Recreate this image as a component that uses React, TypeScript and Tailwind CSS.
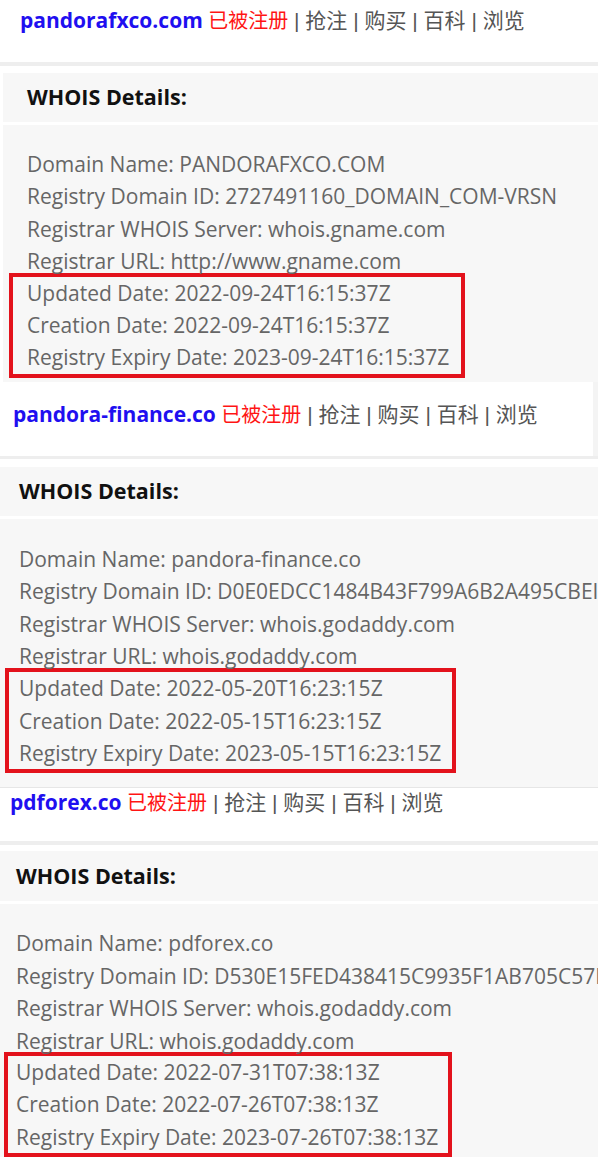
import React from "react";

const FONT = "font-['Open_Sans','Noto_Sans_CJK_SC',sans-serif]";

function Header({ domain, className }: { domain: string; className: string }) {
  return (
    <div className={`${className} bg-white text-[21px] leading-[24px] whitespace-nowrap ${FONT}`}>
      <span className="font-bold text-[#1f0ff0]">{domain}</span>{" "}
      <span className="text-[#ff1414] font-['Noto_Sans_CJK_SC',sans-serif] text-[20px]">已被注册</span>
      <span className="text-[#555555] font-['Liberation_Sans','Noto_Sans_CJK_SC',sans-serif]"> | 抢注 | 购买 | 百科 | 浏览</span>
    </div>
  );
}

function Line({ text, className = "" }: { text: string; className?: string }) {
  return (
    <div className={`h-[32.4px] leading-[32.4px] whitespace-nowrap ${className}`}>{text}</div>
  );
}

type Data = {
  domain: string;
  name: string;
  id: string;
  server: string;
  url: string;
  updated: string;
  created: string;
  expiry: string;
};

const data: Data[] = [
  {
    domain: "pandorafxco.com",
    name: "PANDORAFXCO.COM",
    id: "2727491160_DOMAIN_COM-VRSN",
    server: "whois.gname.com",
    url: "http://www.gname.com",
    updated: "2022-09-24T16:15:37Z",
    created: "2022-09-24T16:15:37Z",
    expiry: "2023-09-24T16:15:37Z",
  },
  {
    domain: "pandora-finance.co",
    name: "pandora-finance.co",
    id: "D0E0EDCC1484B43F799A6B2A495CBEI",
    server: "whois.godaddy.com",
    url: "whois.godaddy.com",
    updated: "2022-05-20T16:23:15Z",
    created: "2022-05-15T16:23:15Z",
    expiry: "2023-05-15T16:23:15Z",
  },
  {
    domain: "pdforex.co",
    name: "pdforex.co",
    id: "D530E15FED438415C9935F1AB705C57I",
    server: "whois.godaddy.com",
    url: "whois.godaddy.com",
    updated: "2022-07-31T07:38:13Z",
    created: "2022-07-26T07:38:13Z",
    expiry: "2023-07-26T07:38:13Z",
  },
];

function Body({ d, linePad, boxPad, boxClass }: { d: Data; linePad: string; boxPad: string; boxClass: string }) {
  return (
    <div className={`text-[21px] text-[#666666] ${FONT}`}>
      <Line text={`Domain Name: ${d.name}`} className={linePad} />
      <Line text={`Registry Domain ID: ${d.id}`} className={linePad} />
      <Line text={`Registrar WHOIS Server: ${d.server}`} className={linePad} />
      <Line text={`Registrar URL: ${d.url}`} className={linePad} />
      <div className={`border-[4px] border-[#e3121c] ${boxClass}`}>
        <Line text={`Updated Date: ${d.updated}`} className={boxPad} />
        <Line text={`Creation Date: ${d.created}`} className={boxPad} />
        <Line text={`Registry Expiry Date: ${d.expiry}`} className={boxPad} />
      </div>
    </div>
  );
}

function WhoisTitle({ className }: { className: string }) {
  return (
    <div className={`bg-[#f7f7f7] flex items-center font-bold text-[21.5px] text-[#111111] ${FONT} ${className}`}>
      WHOIS Details:
    </div>
  );
}

export default function App() {
  return (
    <div className="w-[598px] h-[1161px] bg-white overflow-hidden">
      {/* Section 1 */}
      <Header domain={data[0].domain} className="h-[62px] pl-[20px] pt-[8px]" />
      <div className="h-[4px] bg-[#eeeeee]" />
      <div className="h-[7px]" />
      <WhoisTitle className="ml-[3px] h-[49px] pl-[24px]" />
      <div className="h-[3px]" />
      <div className="ml-[3px] bg-[#f7f7f7] pt-[23px] pb-[4px] pl-[6px] overflow-hidden">
        <Body d={data[0]} linePad="pl-[18px]" boxPad="pl-[14px]" boxClass="w-[456px] -mt-[5px]" />
      </div>

      {/* Section 2 */}
      <div className="flex h-[74px]">
        <Header domain={data[1].domain} className="flex-1 pl-[13px] pt-[20px]" />
        <div className="w-[5px] bg-[#f4f4f4]" />
      </div>
      <div className="h-[3px] bg-[#eeeeee]" />
      <div className="h-[8px]" />
      <WhoisTitle className="h-[49px] pl-[19px]" />
      <div className="h-[3px]" />
      <div className="bg-[#f7f7f7] pt-[24px] pb-[14px] pl-[5px] overflow-hidden">
        <Body d={data[1]} linePad="pl-[14px]" boxPad="pl-[10px]" boxClass="w-[451px] -mt-[4px]" />
      </div>

      {/* Section 3 */}
      <div className="h-[1px] bg-[#e6e6e6]" />
      <Header domain={data[2].domain} className="h-[53px] pl-[10px] pt-[2px]" />
      <div className="h-[4px] bg-[#eeeeee]" />
      <div className="h-[6px]" />
      <WhoisTitle className="h-[50px] pl-[16px]" />
      <div className="h-[3px]" />
      <div className="bg-[#f7f7f7] pt-[23px] pl-[4px] overflow-hidden">
        <Body d={data[2]} linePad="pl-[12px]" boxPad="pl-[8px]" boxClass="w-[448px] -mt-[5px]" />
      </div>
    </div>
  );
}
